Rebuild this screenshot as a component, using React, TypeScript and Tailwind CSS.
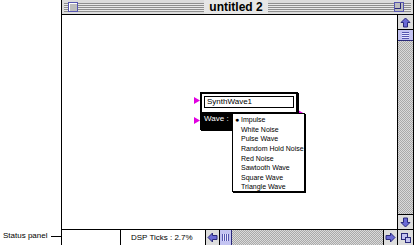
import React from 'react';

const FONT = { fontFamily: '"Liberation Sans", Arial, sans-serif' };

const waves = ['Impulse', 'White Noise', 'Pulse Wave', 'Random Hold Noise', 'Red Noise', 'Sawtooth Wave', 'Square Wave', 'Triangle Wave'];

const Arrow: React.FC<{ dir: 'up' | 'down' | 'left' | 'right' }> = ({ dir }) => {
  const rot = { up: 0, right: 90, down: 180, left: 270 }[dir];
  return (
    <svg width="11" height="11" viewBox="0 0 11 11" style={{ transform: `rotate(${rot}deg)` }}>
      <path d="M5.5 1 L10 5.5 L7.5 5.5 L7.5 10 L3.5 10 L3.5 5.5 L1 5.5 Z" fill="#6b6bd6" stroke="#2a2a7a" strokeWidth="1" />
    </svg>
  );
};

const Pin: React.FC<{ className: string }> = ({ className }) => (
  <svg width="6" height="7" viewBox="0 0 6 7" className={`absolute ${className}`}>
    <path d="M0 0 L6 3.5 L0 7 Z" fill="#e000e0" />
  </svg>
);

const App: React.FC = () => {
  return (
    <div className="flex w-[414px] h-[245px] bg-white" style={FONT}>
      <div className="w-[61px] flex flex-col justify-end pb-[3px]">
        <div className="flex items-center h-[12px]">
          <span className="text-[8px] text-black pl-[3px] leading-none whitespace-nowrap">Status panel</span>
          <div className="flex-1 h-px bg-black ml-[4px]"></div>
        </div>
      </div>

      <div className="w-[353px] flex flex-col border-x border-black">
        {/* title bar */}
        <div className="h-[15px] flex items-center px-[2px] border-b border-black bg-[#dcdcdc] relative">
          <div className="absolute inset-x-[2px] top-[3px] bottom-[2px] bg-[repeating-linear-gradient(#8e8e8e_0_1px,#e8e8e8_1px_2px)]"></div>
          <div className="relative ml-[4px] w-[10px] h-[10px] border border-[#5656b0] bg-[#bdbdbd] shadow-[inset_1px_1px_0_#fff]"></div>
          <div className="relative flex-1 flex justify-center">
            <span className="bg-[#e6e6e6] px-[5px] text-[12px] font-bold leading-[14px] text-black">untitled 2</span>
          </div>
          <div className="relative mr-[7px] w-[10px] h-[10px] border border-[#5656b0] bg-[#bdbdbd] flex items-start justify-start">
            <div className="w-[6px] h-[6px] border-r border-b border-[#2a2a7a]"></div>
          </div>
        </div>

        {/* content */}
        <div className="flex-1 flex">
          <div className="flex-1 relative bg-white">
            <Pin className="left-[132px] top-[82px]" />
            <Pin className="left-[132px] top-[102px]" />
            <Pin className="left-[236px] top-[95px]" />
            <div className="absolute left-[138px] top-[77px] w-[98px] h-[38px] bg-black p-[2px] shadow-[1px_1px_0_#000]">
              <div className="bg-white w-full h-[18px] p-[2px]">
                <div className="border border-black h-[12px] flex items-center px-[2px] text-[8px] leading-none text-black">SynthWave1</div>
              </div>
              <div className="flex items-center h-[14px] bg-black">
                <span className="text-white text-[8px] leading-none pl-[2px]">Wave :</span>
              </div>
            </div>
            <div className="absolute left-[170px] top-[98px] w-[73px] h-[79px] bg-white border border-black shadow-[1px_1px_0_#000] pt-[1px]">
              {waves.map((w, i) => (
                <div key={w} className="flex items-center h-[9.6px] text-[7px] leading-none text-black whitespace-nowrap">
                  <span className="w-[8px] shrink-0 text-center text-[7px]">{i === 0 ? '●' : ''}</span>
                  <span>{w}</span>
                </div>
              ))}
            </div>
          </div>

          {/* vertical scrollbar */}
          <div className="w-[16px] flex flex-col border-l border-black bg-[repeating-conic-gradient(#a9a9a9_0_25%,#dadada_0_50%)] bg-[length:2px_2px]">
            <div className="h-[15px] bg-[#dddddd] border-b border-black flex items-center justify-center"><Arrow dir="up" /></div>
            <div className="h-[11px] bg-[#c4c4f2] border-b border-[#2a2a7a] flex items-center justify-center">
              <div className="w-[7px] h-[7px] bg-[repeating-linear-gradient(#5656b0_0_1px,#e8e8ff_1px_2px)]"></div>
            </div>
            <div className="flex-1"></div>
            <div className="h-[15px] bg-[#dddddd] border-t border-black flex items-center justify-center"><Arrow dir="down" /></div>
          </div>
        </div>

        {/* bottom row */}
        <div className="h-[16px] flex border-t border-black">
          <div className="w-[59px] border-r border-black bg-white"></div>
          <div className="w-[85px] border-r border-black bg-white flex items-center pl-[10px] text-[8px] leading-none text-black whitespace-nowrap">DSP Ticks : 2.7%</div>
          <div className="flex-1 flex bg-[repeating-conic-gradient(#a9a9a9_0_25%,#dadada_0_50%)] bg-[length:2px_2px]">
            <div className="w-[14px] bg-[#dddddd] border-r border-black flex items-center justify-center"><Arrow dir="left" /></div>
            <div className="w-[12px] bg-[#c4c4f2] border-r border-[#2a2a7a] flex items-center justify-center">
              <div className="w-[7px] h-[7px] bg-[repeating-linear-gradient(90deg,#5656b0_0_1px,#e8e8ff_1px_2px)]"></div>
            </div>
            <div className="flex-1"></div>
            <div className="w-[14px] bg-[#dddddd] border-l border-black flex items-center justify-center"><Arrow dir="right" /></div>
          </div>
          <div className="w-[16px] border-l border-black bg-[#dddddd] flex items-center justify-center">
            <div className="relative w-[10px] h-[10px]">
              <div className="absolute left-0 top-0 w-[7px] h-[7px] border border-[#2a2a7a] bg-[#c4c4f2]"></div>
              <div className="absolute right-0 bottom-0 w-[6px] h-[6px] border border-[#2a2a7a] bg-[#c4c4f2]"></div>
            </div>
          </div>
        </div>
      </div>
    </div>
  );
};

export default App;
